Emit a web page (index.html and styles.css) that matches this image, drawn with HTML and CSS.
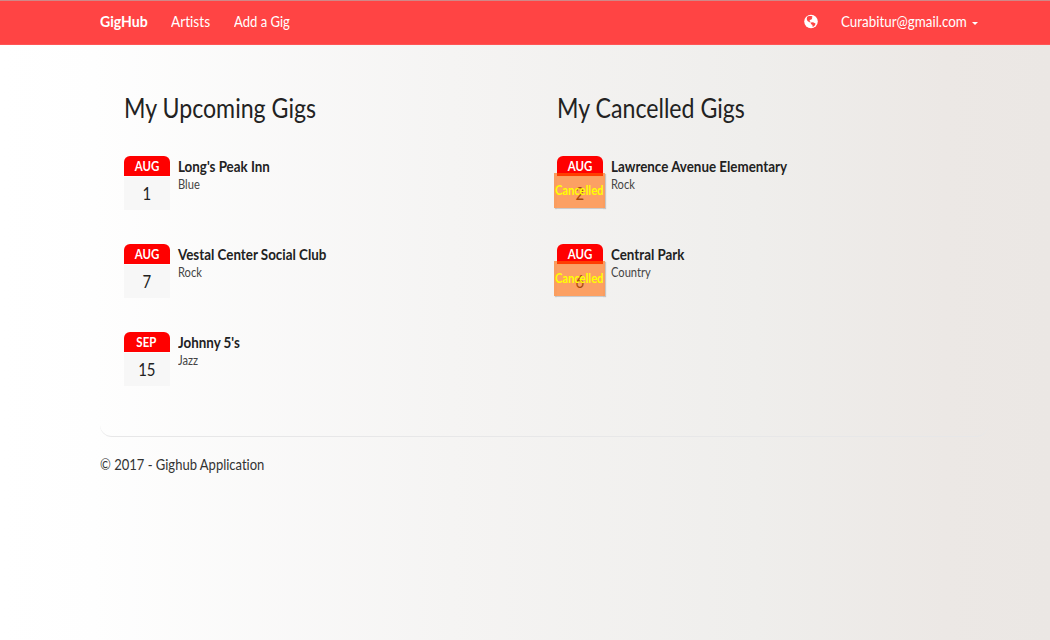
FILE: index.html
```html
<!DOCTYPE html>
<html lang="en">
<head>
<meta charset="utf-8">
<title>My Gigs - GigHub</title>
<link rel="stylesheet" href="styles.css">
</head>
<body>
<nav class="navbar">
  <div class="nav-left">
    <a class="brand"><span class="t">GigHub</span></a>
    <a class="artists"><span class="t">Artists</span></a>
    <a class="add"><span class="t">Add a Gig</span></a>
  </div>
  <div class="nav-right">
    <svg class="globe" viewBox="0 0 14 14"><circle cx="7" cy="7" r="6.8" fill="#fff"/><path fill="#ff4444" d="M3.2 2.2 5 1.4 7.6 1.5 8.7 2.5 7.7 3.2 8.2 4.5 6.5 5.2 5.2 6.6 6.3 7.1 6.6 8.1 5.5 7.8 3.5 6.5 2.7 4.4zM6.8 8 9 7.7 11.5 8.9 11 10.7 9.2 12.2 8.4 11.9 8.5 10.5 6.9 9.4z"/></svg>
    <a class="user"><span class="t">Curabitur@gmail.com</span></a>
    <span class="caret"></span>
  </div>
</nav>
<main class="container">
  <div class="panel">
    <section class="column">
      <h2><span class="t">My Upcoming Gigs</span></h2>
      <ul class="gigs">
        <li><div class="date"><div class="month"><span class="t">AUG</span></div><div class="day"><span class="t">1</span></div></div><div class="details"><div class="venue"><span class="t">Long's Peak Inn</span></div><div class="genre"><span class="t">Blue</span></div></div></li>
        <li><div class="date"><div class="month"><span class="t">AUG</span></div><div class="day"><span class="t">7</span></div></div><div class="details"><div class="venue"><span class="t">Vestal Center Social Club</span></div><div class="genre"><span class="t">Rock</span></div></div></li>
        <li><div class="date"><div class="month"><span class="t">SEP</span></div><div class="day"><span class="t">15</span></div></div><div class="details"><div class="venue"><span class="t">Johnny 5's</span></div><div class="genre"><span class="t">Jazz</span></div></div></li>
      </ul>
    </section>
    <section class="column">
      <h2><span class="t">My Cancelled Gigs</span></h2>
      <ul class="gigs">
        <li><div class="date"><div class="month"><span class="t">AUG</span></div><div class="day"><span class="t">2</span></div><div class="cancelled"><span class="t">Cancelled</span></div></div><div class="details"><div class="venue"><span class="t">Lawrence Avenue Elementary</span></div><div class="genre"><span class="t">Rock</span></div></div></li>
        <li><div class="date"><div class="month"><span class="t">AUG</span></div><div class="day"><span class="t">6</span></div><div class="cancelled"><span class="t">Cancelled</span></div></div><div class="details"><div class="venue"><span class="t">Central Park</span></div><div class="genre"><span class="t">Country</span></div></div></li>
      </ul>
    </section>
  </div>
  <footer><span class="t">© 2017 - Gighub Application</span></footer>
</main>
</body>
</html>
```
FILE: styles.css
```css
* { box-sizing: border-box; }
body {
  margin: 0;
  height: 640px;
  overflow: hidden;
  font-family: Lato, sans-serif;
  font-size: 15px;
  font-variant-ligatures: none;
  color: #222;
  background: linear-gradient(to right, #fff 0%, #fefefe 9%, #f5f4f3 43%, #efeeec 72%, #ece8e5 90%, #ebe7e4 100%);
}
.t {
  display: inline-block;
  white-space: nowrap;
  transform: scaleX(.88);
  transform-origin: left center;
}
.navbar {
  height: 45px;
  padding: 0 72px 0 100px;
  display: flex;
  justify-content: space-between;
  color: #fff;
  line-height: 40px;
  background: #ff4444;
  border-top: 1px solid #cf8888;
  border-bottom: 1px solid #f55;
}
.nav-left, .nav-right { display: flex; align-items: flex-start; }
.brand { width: 71px; font-weight: 700; }
.brand .t { transform: scaleX(.94); }
.artists { width: 63px; }
.artists .t { transform: scaleX(.91); }
.add .t { transform: scaleX(.87); }
.globe { width: 14px; height: 15px; margin: 13px 23px 0 0; }
.user { width: 131px; }
.user .t { transform: scaleX(.893); }
.caret {
  border: 3px solid transparent;
  border-top-color: #fff;
  border-bottom: 0;
  margin-top: 21px;
}
.container { width: 888px; margin-left: 100px; }
.panel {
  height: 392px;
  padding: 44px 0 0 23.5px;
  display: flex;
  border-bottom: 1px solid #e7e7e8;
  border-radius: 0 0 12px 12px;
}
.column { flex: 0 0 433px; }
h2 {
  margin: 0 0 28px;
  font-size: 26px;
  line-height: 39px;
  font-weight: 400;
}
h2 .t { transform: scaleX(.89); }
.gigs { margin: 0; padding: 0; list-style: none; }
.gigs li { display: flex; height: 88px; }
.date { position: relative; width: 46.5px; height: 54px; margin-right: 8px; text-align: center; }
.date .t { transform-origin: center; }
.month {
  height: 20px;
  line-height: 20px;
  background: #f00;
  color: #fff;
  font-size: 13px;
  font-weight: 700;
  border-radius: 6px 6px 0 0;
}
.day { height: 33px; margin-top: 1px; line-height: 33px; font-size: 17px; background: #f7f7f7; }
.cancelled {
  position: absolute;
  left: -2.5px;
  top: 17px;
  width: 51px;
  height: 35px;
  line-height: 35px;
  display: flex;
  justify-content: center;
  color: #ff0;
  font-size: 13px;
  font-weight: 700;
  background: rgba(255, 102, 0, .6);
  box-shadow: 1px 1px 1px rgba(0, 0, 0, .18);
}
.cancelled .t { transform: scaleX(.86); }
.venue { padding-top: 1px; font-size: 14.5px; line-height: 19px; font-weight: 700; }
.venue .t { transform: scaleX(.922); }
.genre { font-size: 12.5px; line-height: 18px; color: #444; }
.genre .t { transform: scaleX(.89); }
footer { padding-top: 17px; line-height: 20px; color: #333; }
footer .t { transform: scaleX(.867); }
```
